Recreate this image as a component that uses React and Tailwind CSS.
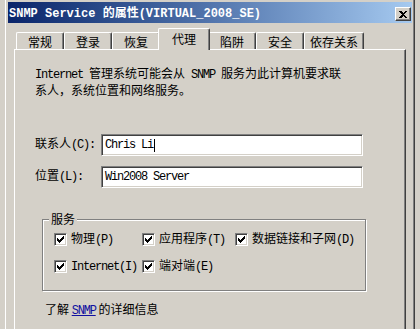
import React from 'react';

// Latin text in the dialog font (narrow monospace cells)
const M = ({ children }) => (
  <span className="font-['Liberation_Mono',monospace] text-[12px] tracking-[-1.2px]">{children}</span>
);

const CheckBox = () => (
  <span className="w-[13px] h-[13px] shrink-0 bg-white border border-t-[#808080] border-l-[#808080] border-b-white border-r-white shadow-[inset_1px_1px_#404040,inset_-1px_-1px_#d4d0c8] flex items-center justify-center">
    <svg width="7" height="7" viewBox="0 0 7 7" shapeRendering="crispEdges">
      <path d="M0 2h1v1h1v1h1V3h1V2h1V1h1V0h1v3H6v1H5v1H4v1H3v1H2V6H1V5H0z" fill="#000" />
    </svg>
  </span>
);

const Option = ({ children }) => (
  <div className="flex items-center gap-[4px] h-[14px] whitespace-nowrap">
    <CheckBox />
    <span className="leading-[14px]">{children}</span>
  </div>
);

const Tab = ({ label, active, wide }) =>
  active ? (
    <div className="relative z-10 -mx-[2px] mb-[-1px] h-[22px] w-[52px] bg-[#d4d0c8] border-l border-t border-white border-r border-r-[#404040] shadow-[inset_-1px_0_#808080] rounded-t-[2px] flex justify-center pt-[3px] leading-[14px]">
      {label}
    </div>
  ) : (
    <div className={`h-[17px] ${wide ? 'w-[60px]' : 'w-[48px]'} bg-[#d4d0c8] border-l border-t border-white border-r border-r-[#404040] shadow-[inset_-1px_0_#808080] rounded-t-[2px] flex justify-center pt-[2px] leading-[14px]`}>
      {label}
    </div>
  );

const Field = ({ label, children }) => (
  <div className="flex items-center">
    <div className="w-[66px] leading-[14px] whitespace-nowrap -mt-[2px]">{label}</div>
    <div className="w-[262px] h-[22px] bg-white border border-t-[#808080] border-l-[#808080] border-b-white border-r-white shadow-[inset_1px_1px_#404040,inset_-1px_-1px_#d4d0c8] flex items-center pl-[3px] whitespace-nowrap">
      {children}
    </div>
  </div>
);

export default function App() {
  return (
    <div className="w-[420px] h-[329px] overflow-hidden bg-[#d4d0c8] flex text-[12px] text-black font-['Noto_Sans_CJK_SC','Noto_Sans',sans-serif]">
      {/* window behind */}
      <div className="w-[5px] shrink-0" />

      {/* dialog */}
      <div className="w-[410px] shrink-0 flex flex-col border-l border-white border-r border-r-[#404040] shadow-[inset_-1px_0_#808080] pl-[2px] pr-[2px] pt-[2px]">
        {/* title bar */}
        <div className="h-[21px] shrink-0 flex items-center bg-gradient-to-r from-[#0a246a] to-[#a6caf0] pl-[1px] pr-[1px]">
          <div className="flex-1 text-white font-bold whitespace-nowrap leading-[14px]">
            <span className="font-['Liberation_Mono',monospace] text-[12px]">SNMP Service </span>
            的属性
            <span className="font-['Liberation_Mono',monospace] text-[12px]">(VIRTUAL_2008_SE)</span>
          </div>
          <div className="w-[16px] h-[14px] mt-[3px] bg-[#d4d0c8] border border-t-white border-l-white border-b-[#404040] border-r-[#404040] shadow-[inset_-1px_-1px_#808080] flex items-center justify-center">
            <svg width="8" height="7" viewBox="0 0 8 7" shapeRendering="crispEdges">
              <path d="M0 0h2l2 2 2-2h2L5 3.5 8 7H6L4 5 2 7H0l3-3.5z" fill="#000" />
            </svg>
          </div>
        </div>

        {/* tabs */}
        <div className="mt-[5px] h-[21px] shrink-0 flex items-end pl-[8px]">
          <Tab label="常规" />
          <Tab label="登录" />
          <Tab label="恢复" />
          <Tab label="代理" active />
          <Tab label="陷阱" />
          <Tab label="安全" />
          <Tab label="依存关系" wide />
        </div>

        {/* tab page */}
        <div className="ml-[6px] w-[392px] flex-1 border-l border-t border-white border-r border-r-[#404040] shadow-[inset_-1px_0_#808080]">
          <div className="ml-[20px] mt-[15px] leading-[16px] whitespace-nowrap">
            <div><M>Internet </M>管理系统可能会从<M> SNMP </M>服务为此计算机要求联</div>
            <div className="-mt-px">系人，系统位置和网络服务。</div>
          </div>

          <div className="ml-[20px] mt-[36px]">
            <Field label={<>联系人<M>(C):</M></>}>
              <M>Chris Li</M>
              <span className="inline-block w-px h-[13px] bg-black ml-[1px]" />
            </Field>
          </div>
          <div className="ml-[20px] mt-[10px]">
            <Field label={<>位置<M>(L):</M></>}>
              <M>Win2008 Server</M>
            </Field>
          </div>

          {/* services group */}
          <div className="relative ml-[27px] mt-[31px] w-[324px] h-[72px] border border-[#808080] shadow-[inset_1px_1px_#fff,1px_1px_#fff] pl-[11px] pt-[12px]">
            <div className="absolute -top-[8px] left-[6px] px-[2px] bg-[#d4d0c8] leading-[14px]">服务</div>
            <div className="grid grid-cols-[88px_93px_auto] gap-y-[13px]">
              <Option>物理<M>(P)</M></Option>
              <Option>应用程序<M>(T)</M></Option>
              <Option>数据链接和子网<M>(D)</M></Option>
              <Option><M>Internet(I)</M></Option>
              <Option>端对端<M>(E)</M></Option>
            </div>
          </div>

          <div className="ml-[30px] mt-[11px] leading-[14px] whitespace-nowrap">
            了解 <span className="text-[#1010a0] underline"><M>SNMP</M></span> 的详细信息
          </div>
        </div>
      </div>

      {/* window behind */}
      <div className="w-[5px] shrink-0" />
    </div>
  );
}
